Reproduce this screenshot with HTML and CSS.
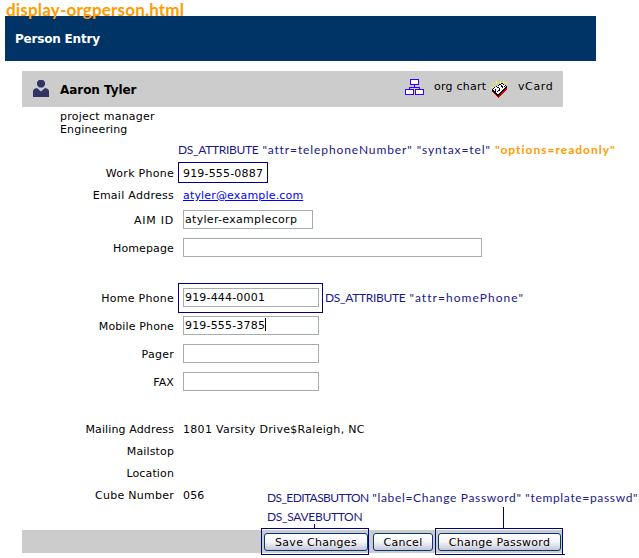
FILE: index.html
```html
<!DOCTYPE html>
<html lang="en">
<head>
<meta charset="utf-8">
<title>Person Entry</title>
<link rel="stylesheet" href="styles.css">
</head>
<body>
<div class="page">
  <header class="banner">Person Entry</header>
  <main class="entry">
    <div class="person-bar">
      <svg class="person-icon" width="16" height="17" viewBox="0 0 16 17"><path fill="#333366" d="M6 0h4l2 2v3l-2 2.500H6L4 5V2zM1 9l3-1 4 3.500L12 8l3 1 1 2v6H0v-6z"/></svg>
      <h1 class="person-name">Aaron Tyler</h1>
      <svg class="chart-icon" width="19" height="16" viewBox="0 0 19 16" shape-rendering="crispEdges"><path d="M9.5 5.500v3M4.500 10V8.500h10V10" fill="none" stroke="#30f"/><g fill="#fff" stroke="#30f"><path d="M5.500.5h8v5h-8zM.5 10.500h8v5h-8zM10.500 10.500h8v5h-8z"/></g></svg>
      <span class="action chart-link">org chart</span>
      <svg class="card-icon" width="17" height="17" viewBox="0 0 17 17" shape-rendering="crispEdges"><path d="M1 2h1v1h1v1H2V3H1zM5 0h1v3H5zM9 1h1v2H9zM12 0h1v2h-1zM14 1h2v1h-2zM0 6h3v1H0z" fill="#ff0"/><path d="M1 9l6 6 9-9v2l-9 9-6-6z" fill="#d00"/><path d="M1 8l5-3 5-3 5 3v2l-9 8-6-5z" fill="#000"/><path d="M2 8l5-3 4-2 4 2-8 8-5-4z" fill="#fff"/><path d="M4 8h1v3H4zM6 6h2v1h1v3H7V9h1V7H6zM10 4h1v1h1v2h-1V6h-1zM13 5h1v1h-1zM6 10h1v1H6z" fill="#000"/></svg>
      <span class="action card-link">vCard</span>
    </div>
    <div class="subtitle"><div class="job">project manager</div><div class="dept">Engineering</div></div>
    <div class="fields">
      <div class="row"><span class="label spaced">Work Phone</span><span class="value num">919-555-0887<i class="outline outline-work"></i></span></div>
      <div class="row"><span class="label spaced">Email Address</span><a class="value mail" href="#">atyler@example.com</a></div>
      <div class="row tall"><span class="label aim-label">AIM ID</span><span class="box aim">atyler-examplecorp</span></div>
      <div class="row tall"><span class="label">Homepage</span><span class="box wide"></span></div>
    </div>
    <div class="fields">
      <div class="row tall"><span class="label spaced">Home Phone</span><span class="box num">919-444-0001<i class="outline outline-home"></i></span></div>
      <div class="row tall"><span class="label">Mobile Phone</span><span class="box num">919-555-3785<i class="caret"></i></span></div>
      <div class="row tall"><span class="label spaced">Pager</span><span class="box"></span></div>
      <div class="row tall"><span class="label">FAX</span><span class="box"></span></div>
    </div>
    <div class="fields">
      <div class="row"><span class="label">Mailing Address</span><span class="value address">1801 Varsity Drive$Raleigh, NC</span></div>
      <div class="row"><span class="label">Mailstop</span></div>
      <div class="row"><span class="label">Location</span></div>
      <div class="row"><span class="label spaced">Cube Number</span><span class="value">056</span></div>
    </div>
    <footer class="buttons">
      <button class="btn save">Save Changes</button>
      <button class="btn cancel">Cancel</button>
      <button class="btn change">Change Password</button>
    </footer>
  </main>
  <div class="note file-name">display-orgperson.html</div>
  <div class="note note-tel"><span class="keyword">DS_ATTRIBUTE</span> "attr=telephoneNumber" "syntax=tel"</div>
  <div class="note note-readonly">"options=readonly"</div>
  <div class="note note-home"><span class="keyword">DS_ATTRIBUTE</span> "attr=homePhone"</div>
  <div class="note note-edit"><span class="keyword">DS_EDITASBUTTON</span> "label=Change Password" "template=passwd"</div>
  <div class="note note-save"><span class="keyword">DS_SAVEBUTTON</span></div>
  <i class="outline outline-save"></i>
  <i class="outline outline-change"></i>
  <i class="line line-save"></i>
  <i class="line line-change"></i>
  <i class="line line-tail"></i>
</div>
</body>
</html>
```

FILE: styles.css
```css
* { box-sizing: border-box; }
body { margin: 0; background: #fff; }
.page {
  position: relative;
  width: 639px;
  height: 558px;
  padding: 16px 0 0 5px;
  overflow: hidden;
  font: 11px/14px "DejaVu Sans", Verdana, sans-serif;
  letter-spacing: 0.13px;
  color: #000;
  white-space: nowrap;
}
.banner {
  width: 591px;
  height: 45px;
  padding: 0 10px;
  background: #036;
  color: #fff;
  font-size: 12px;
  font-weight: bold;
  line-height: 47px;
  letter-spacing: -0.2px;
}
.entry { width: 541px; margin: 10px 0 0 17px; }
.person-bar { display: flex; height: 36px; padding-left: 11px; background: #ccc; }
.person-icon { margin-top: 9px; }
.person-name {
  width: 345px;
  margin: 0 0 0 11px;
  font-size: 12px;
  line-height: 39px;
  letter-spacing: -0.05px;
}
.chart-icon { margin-top: 8px; }
.action { margin-left: 10px; line-height: 31px; letter-spacing: 0.25px; }
.chart-link { width: 57px; }
.card-link { letter-spacing: 0.6px; }
.card-icon { margin-top: 10px; }
.subtitle { height: 55px; padding: 3px 0 0 38px; line-height: 13px; }
.job { letter-spacing: 0.25px; }
.fields { margin-bottom: 22px; }
.row { display: flex; height: 22px; line-height: 24px; }
.tall { height: 28px; line-height: 30px; }
.label { width: 152px; margin-right: 9px; text-align: right; }
.spaced { letter-spacing: 0.27px; }
.aim-label { letter-spacing: 0.75px; }
.value { position: relative; }
.num { letter-spacing: 0.18px; }
.mail { color: #00f; letter-spacing: 0.17px; }
.address { letter-spacing: 0.3px; }
.box {
  position: relative;
  width: 136px;
  height: 19px;
  margin-top: 4px;
  padding-left: 1px;
  border: 1px solid #a5acb2;
  line-height: 17px;
}
.aim { width: 130px; letter-spacing: 0.3px; }
.wide { width: 299px; }
.caret { position: absolute; left: 81px; top: 1px; width: 1px; height: 13px; background: #000; }
.outline { position: absolute; border: 1px solid #000080; }
.outline-work { left: -5px; top: 0; width: 90px; height: 21px; }
.outline-home { left: -6px; top: -6px; width: 145px; height: 30px; }
.buttons {
  display: flex;
  align-items: center;
  gap: 5px;
  height: 23px;
  margin-top: 24px;
  padding-left: 242px;
  background: #ccc;
}
.fields:nth-last-of-type(1) { margin-bottom: 0; }
.btn {
  height: 18px;
  padding: 1px 0 0;
  border: 1px solid #003c74;
  border-radius: 3px;
  background: linear-gradient(#fff 0%, #f4f4fa 50%, #c6c5d7 100%);
  color: #000;
  font: 11px/15px "DejaVu Sans", Verdana, sans-serif;
  letter-spacing: 0.3px;
}
.save { width: 104px; }
.cancel { width: 60px; }
.change { width: 123px; }
.note {
  position: absolute;
  font: 12px/16px Lato, sans-serif;
  color: #191987;
}
.keyword { letter-spacing: -0.3px; }
.file-name { left: 6px; top: 0; color: #ff9c00; font-size: 17px; line-height: 20px; font-weight: bold; letter-spacing: 0.18px; }
.note-tel { left: 178px; top: 142px; letter-spacing: 0.9px; }
.note-readonly { left: 495px; top: 142px; color: #ff9c00; font-weight: bold; letter-spacing: 1px; }
.note-home { left: 325px; top: 290px; letter-spacing: 1.05px; }
.note-edit { left: 267px; top: 490px; letter-spacing: 0.67px; }
.note-edit .keyword { letter-spacing: -0.6px; }
.note-save { left: 267px; top: 509px; }
.outline-save { left: 261px; top: 528px; width: 108px; height: 27px; }
.outline-change { left: 435px; top: 528px; width: 128px; height: 27px; }
.line { position: absolute; width: 1px; background: #000080; }
.line-save { left: 314px; top: 524px; height: 4px; }
.line-change { left: 503px; top: 507px; height: 21px; }
.line-tail { left: 562px; top: 554px; width: 3px; height: 1px; }
```
